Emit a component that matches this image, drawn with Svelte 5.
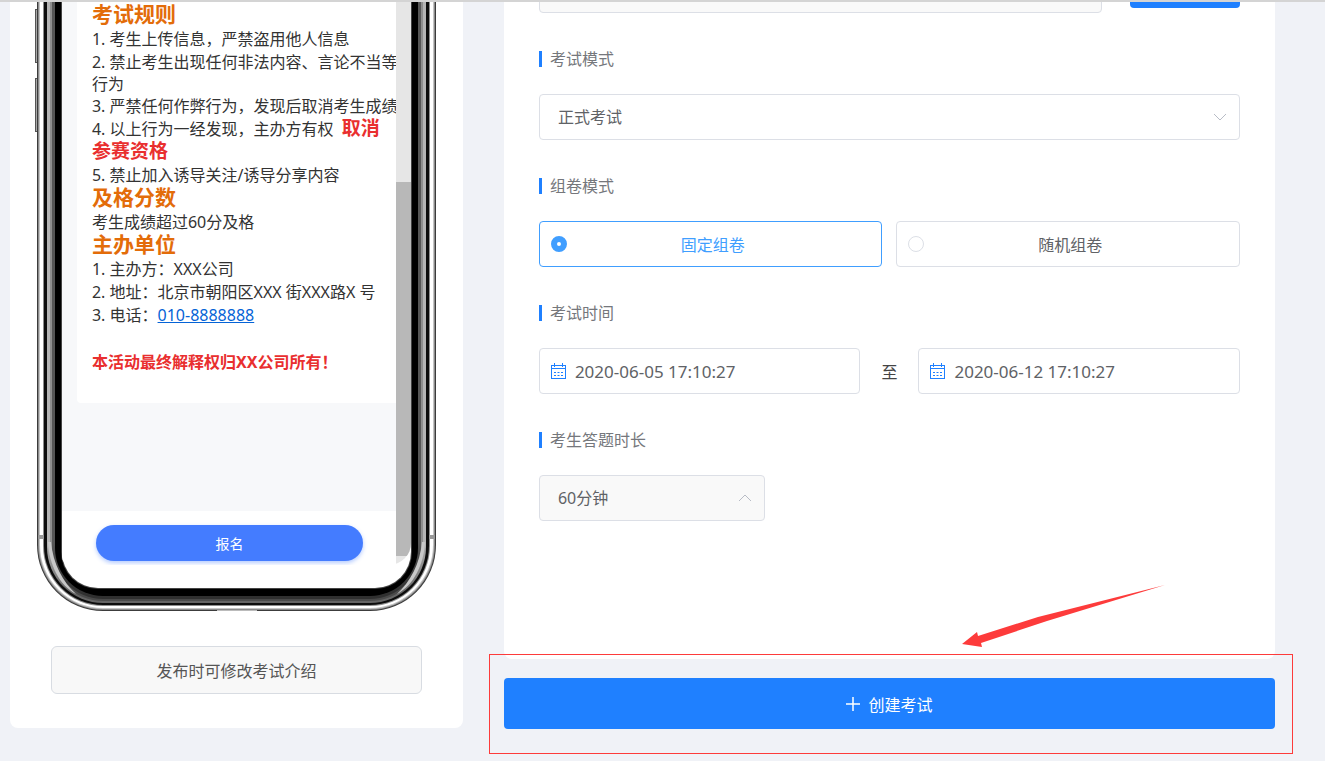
<script lang="ts">
  let examMode = $state("formal");
  let paperMode = $state("fixed");
  let startTime = $state("2020-06-05 17:10:27");
  let endTime = $state("2020-06-12 17:10:27");
  let duration = $state("60");
  let link = $state("");

  const paperModes = [
    { value: "fixed", label: "固定组卷" },
    { value: "random", label: "随机组卷" },
  ];

  // Phone bezel, outermost ring first
  const rings = [
    { inset: 0, bottom: 609, r: 66, fill: "#3c3c3c" },
    { inset: 1, bottom: 608, r: 65, fill: "#8a8a8a" },
    { inset: 2, bottom: 607, r: 64, fill: "#c4c4c4" },
    { inset: 3, bottom: 606, r: 63, fill: "#ffffff" },
    { inset: 6, bottom: 604, r: 60, fill: "#8c8c8c" },
    { inset: 7, bottom: 603, r: 59, fill: "#0c0c0c" },
    { inset: 10, bottom: 601, r: 56, fill: "url(#metal)" },
    { inset: 13, bottom: 599, r: 53, fill: "url(#metalMid)" },
    { inset: 15, bottom: 597, r: 51, fill: "url(#metalDark)" },
    { inset: 18, bottom: 594, r: 48, fill: "#000000" },
    { inset: 24, bottom: 587, r: 37, fill: "#444444" },
    { inset: 25, bottom: 586, r: 36, fill: "#ffffff" },
  ];

  const metals = [
    { id: "metal", from: "#b4b4b4", to: "#646464" },
    { id: "metalMid", from: "#8e8e8e", to: "#4a4a4a" },
    { id: "metalDark", from: "#565656", to: "#303030" },
  ];
</script>

{#snippet calendar()}
  <svg class="calendar" width="17" height="17" viewBox="0 0 17 17" fill="none" stroke="#1f80ff">
    <path d="M1 2.500h15M1 5.500h15M1 15.500h15M4.500 0v4M12.500 0v4" />
    <path d="M1.500 2v14M15.500 2v14" />
    <path d="M4 9.500h2M7.500 9.500h2M11 9.500h2M4 12.500h2M7.500 12.500h2M11 12.500h2" />
  </svg>
{/snippet}

<div class="page">
  <aside class="preview">
    <div class="phone">
      <svg class="frame" width="399" height="609" viewBox="0 0 399 609">
        <defs>
          {#each metals as metal}
            <linearGradient id={metal.id} gradientUnits="userSpaceOnUse" x1="0" y1="540" x2="0" y2="592">
              <stop offset="0" stop-color={metal.from} />
              <stop offset="1" stop-color={metal.to} />
            </linearGradient>
          {/each}
        </defs>
        <g fill="#a8a8a8" stroke="#555">
          <rect x="-1.500" y="7.500" width="4" height="53" />
          <rect x="-1.500" y="76.500" width="4" height="53" />
          <rect x="396.500" y="26.500" width="2" height="84" />
        </g>
        {#each rings as ring}
          <rect
            x={ring.inset}
            y="-100"
            width={399 - ring.inset * 2}
            height={ring.bottom + 100}
            rx={ring.r}
            fill={ring.fill}
          />
        {/each}
        <g fill="#c8c8c8">
          <path d="M11 540C12 562 22 583 39 592 26 580 16 562 14 540z" />
          <path d="M388 540C387 562 377 583 360 592 373 580 383 562 385 540z" />
        </g>
        <path d="M1 533h6v4h-6zM392 533h6v4h-6z" fill="#999" />
        <path d="M180 608.500h40" stroke="#bbb" />
      </svg>

      <div class="screen">
        <div class="scroll">
          <div class="content">
            <article>
              <h3>考试规则</h3>
              <p>1. 考生上传信息，严禁盗用他人信息</p>
              <p class="wrapped">2. 禁止考生出现任何非法内容、言论不当等<br />行为</p>
              <p>3. 严禁任何作弊行为，发现后取消考生成绩</p>
              <p>4. 以上行为一经发现，主办方有权&nbsp; <strong>取消<br />参赛资格</strong></p>
              <p>5. 禁止加入诱导关注/诱导分享内容</p>
              <h3>及格分数</h3>
              <p>考生成绩超过60分及格</p>
              <h3>主办单位</h3>
              <p>1. 主办方：XXX公司</p>
              <p>2. 地址：北京市朝阳区XXX 街XXX路X 号</p>
              <p>3. 电话：<a href="tel:010-8888888">010-8888888</a></p>
              <p class="notice">本活动最终解释权归XX公司所有！</p>
            </article>
          </div>
          <div class="signup">
            <button type="button">报名</button>
          </div>
        </div>
        <div class="track"><div class="thumb"></div></div>
      </div>
    </div>
    <button type="button" class="edit">发布时可修改考试介绍</button>
  </aside>

  <main>
    <form class="panel">
      <div class="link-row">
        <input type="text" aria-label="链接" readonly bind:value={link} />
        <button type="button" aria-label="复制"></button>
      </div>

      <section>
        <label class="title" for="exam-mode">考试模式</label>
        <div class="select">
          <select id="exam-mode" bind:value={examMode}>
            <option value="formal">正式考试</option>
          </select>
          <svg width="14" height="8" viewBox="0 0 14 8"><path d="M1 1l6 6 6-6" /></svg>
        </div>
      </section>

      <section>
        <span class="title" id="paper-mode">组卷模式</span>
        <div class="radios" role="radiogroup" aria-labelledby="paper-mode">
          {#each paperModes as mode}
            <label class="radio" class:checked={paperMode === mode.value}>
              <input type="radio" name="paper" value={mode.value} bind:group={paperMode} />
              <span>{mode.label}</span>
            </label>
          {/each}
        </div>
      </section>

      <section>
        <span class="title">考试时间</span>
        <div class="dates">
          <div class="date">
            {@render calendar()}
            <input type="text" aria-label="开始时间" bind:value={startTime} />
          </div>
          <span class="to">至</span>
          <div class="date">
            {@render calendar()}
            <input type="text" aria-label="结束时间" bind:value={endTime} />
          </div>
        </div>
      </section>

      <section>
        <label class="title" for="duration">考生答题时长</label>
        <div class="select short">
          <select id="duration" bind:value={duration}>
            <option value="60">60分钟</option>
          </select>
          <svg width="14" height="8" viewBox="0 0 14 8"><path d="M1 7l6-6 6 6" /></svg>
        </div>
      </section>
    </form>

    <div class="create">
      <button type="button">
        <svg width="14" height="14" viewBox="0 0 14 14"><path d="M7 0v14M0 7h14" /></svg>
        创建考试
      </button>
      <div class="highlight"></div>
      <svg class="arrow" width="204" height="63" viewBox="0 0 204 63">
        <path d="M0 59L15 47l1 4L76 32 203 0 85 36 19 58l1 4z" fill="#fd3b3b" />
      </svg>
    </div>
  </main>
</div>

<style>
  :global(body) {
    margin: 0;
    background: #f0f2f7;
  }

  .page {
    box-sizing: border-box;
    min-height: 100vh;
    display: grid;
    grid-template-columns: 37fr 63fr;
    align-items: start;
    gap: 41px;
    padding: 0 50px 0 10px;
    border-top: 2px solid #d4d4d4;
    overflow: hidden;
    background: #f0f2f7;
    color: #606266;
    font-family: "Noto Sans", "Noto Sans CJK SC", sans-serif;
    font-size: 16px;
  }

  button,
  input,
  select {
    font: inherit;
    color: inherit;
    box-sizing: border-box;
  }

  button {
    cursor: pointer;
  }

  .preview {
    display: flex;
    flex-direction: column;
    align-items: center;
    padding: 0 41px 34px;
    border-radius: 0 0 8px 8px;
    background: #fff;
  }

  .phone {
    position: relative;
    width: 399px;
    margin: 0 -20px;
    padding: 0 25px 46px;
    box-sizing: border-box;
  }

  .frame {
    position: absolute;
    left: 0;
    bottom: 0;
    overflow: visible;
    clip-path: inset(0 -4px);
  }

  .screen {
    position: relative;
    display: flex;
    overflow: hidden;
    border-radius: 0 0 22px 8px;
  }

  .scroll {
    flex: 1;
    min-width: 0;
    overflow: hidden;
  }

  .content {
    padding: 0 0 108px 15px;
    background: #f7f8fa;
  }

  article {
    padding: 2px 0 29px 15px;
    border-radius: 0 0 0 4px;
    background: #fff;
    color: #333;
    line-height: 23px;
    white-space: nowrap;
  }

  h3,
  p {
    margin: 0;
  }

  h3 {
    padding-bottom: 3px;
    font-size: 21px;
    line-height: 21px;
    color: #e36c09;
  }

  strong {
    font-size: 19px;
    line-height: 20px;
    color: #e92f2f;
  }

  .wrapped {
    line-height: 22px;
  }

  .notice {
    margin-top: 24px;
    color: #e92f2f;
    font-weight: bold;
  }

  article a {
    color: #0563d6;
  }

  .signup {
    padding: 14px 33px 4px 34px;
    background: #fff;
  }

  .signup button {
    display: block;
    width: 100%;
    height: 36px;
    border: 0;
    border-radius: 18px;
    background: #447cff;
    box-shadow: 0 2px 4px rgba(68, 124, 255, 0.4);
    color: #fff;
    font-size: 14px;
  }

  .track {
    display: flex;
    flex-direction: column;
    width: 15px;
    padding: 180px 0 9px;
    box-sizing: border-box;
    background: #e6e6e6;
  }

  .thumb {
    flex: 1;
    background: #b8b8b8;
  }

  .edit {
    width: 100%;
    height: 48px;
    margin-top: 35px;
    border: 1px solid #d8dce2;
    border-radius: 6px;
    background: #f8f8f8;
    color: #555;
  }

  .panel {
    padding: 0 35px 138px;
    border-radius: 0 0 8px 8px;
    background: #fff;
  }

  .link-row {
    display: flex;
    align-items: center;
    gap: 28px;
    margin-top: -35px;
  }

  .link-row input {
    flex: 1;
    height: 46px;
    border: 1px solid #dcdfe6;
    border-radius: 4px;
    background: #f9f9f9;
  }

  .link-row button {
    width: 110px;
    height: 36px;
    border: 0;
    border-radius: 4px;
    background: #1f80ff;
  }

  section {
    margin-top: 38px;
  }

  .title {
    display: block;
    padding-left: 8px;
    margin-bottom: 27px;
    border-left: 3px solid #1f80ff;
    line-height: 16px;
    color: #75777c;
  }

  .select {
    position: relative;
  }

  .short {
    width: 226px;
  }

  .select select {
    display: block;
    width: 100%;
    height: 46px;
    padding: 0 40px 0 18px;
    border: 1px solid #dcdfe6;
    border-radius: 4px;
    background: #fff;
    appearance: none;
  }

  .short select {
    background: #f9f9f9;
  }

  .select svg {
    position: absolute;
    right: 13px;
    top: 19px;
    fill: none;
    stroke: #b8bcc6;
    pointer-events: none;
  }

  .radios {
    display: flex;
    gap: 14px;
  }

  .radio {
    flex: 1;
    display: flex;
    align-items: center;
    height: 46px;
    padding: 0 11px;
    box-sizing: border-box;
    border: 1px solid #dcdfe6;
    border-radius: 4px;
    cursor: pointer;
  }

  .radio span {
    flex: 1;
    margin-right: 12px;
    text-align: center;
  }

  .radio input {
    width: 16px;
    height: 16px;
    margin: 0;
    border: 1px solid #dcdfe6;
    border-radius: 50%;
    background: #fff;
    appearance: none;
  }

  .radio.checked {
    border-color: #409eff;
    color: #409eff;
  }

  .radio.checked input {
    border: 6px solid #409eff;
  }

  .dates {
    display: flex;
    align-items: center;
  }

  .date {
    flex: 1;
    display: flex;
    align-items: center;
    gap: 8px;
    height: 46px;
    padding: 0 10px;
    box-sizing: border-box;
    border: 1px solid #dcdfe6;
    border-radius: 4px;
  }

  .calendar {
    flex: none;
  }

  .date input {
    flex: 1;
    min-width: 0;
    padding: 0;
    border: 0;
    outline: 0;
    background: none;
    font-size: 17px;
  }

  .to {
    width: 58px;
    text-align: center;
    color: #444;
  }

  .create {
    position: relative;
    margin-top: 19px;
  }

  .create button {
    display: flex;
    align-items: center;
    justify-content: center;
    gap: 8px;
    width: 100%;
    height: 51px;
    border: 0;
    border-radius: 4px;
    background: #1f80ff;
    color: #fff;
  }

  .create button svg {
    stroke: #fff;
    stroke-width: 1.5;
  }

  .highlight {
    position: absolute;
    inset: -24px -18px -25px -15px;
    border: 1px solid #fd3b3b;
    pointer-events: none;
  }

  .arrow {
    position: absolute;
    right: 109px;
    bottom: 81px;
  }
</style>
